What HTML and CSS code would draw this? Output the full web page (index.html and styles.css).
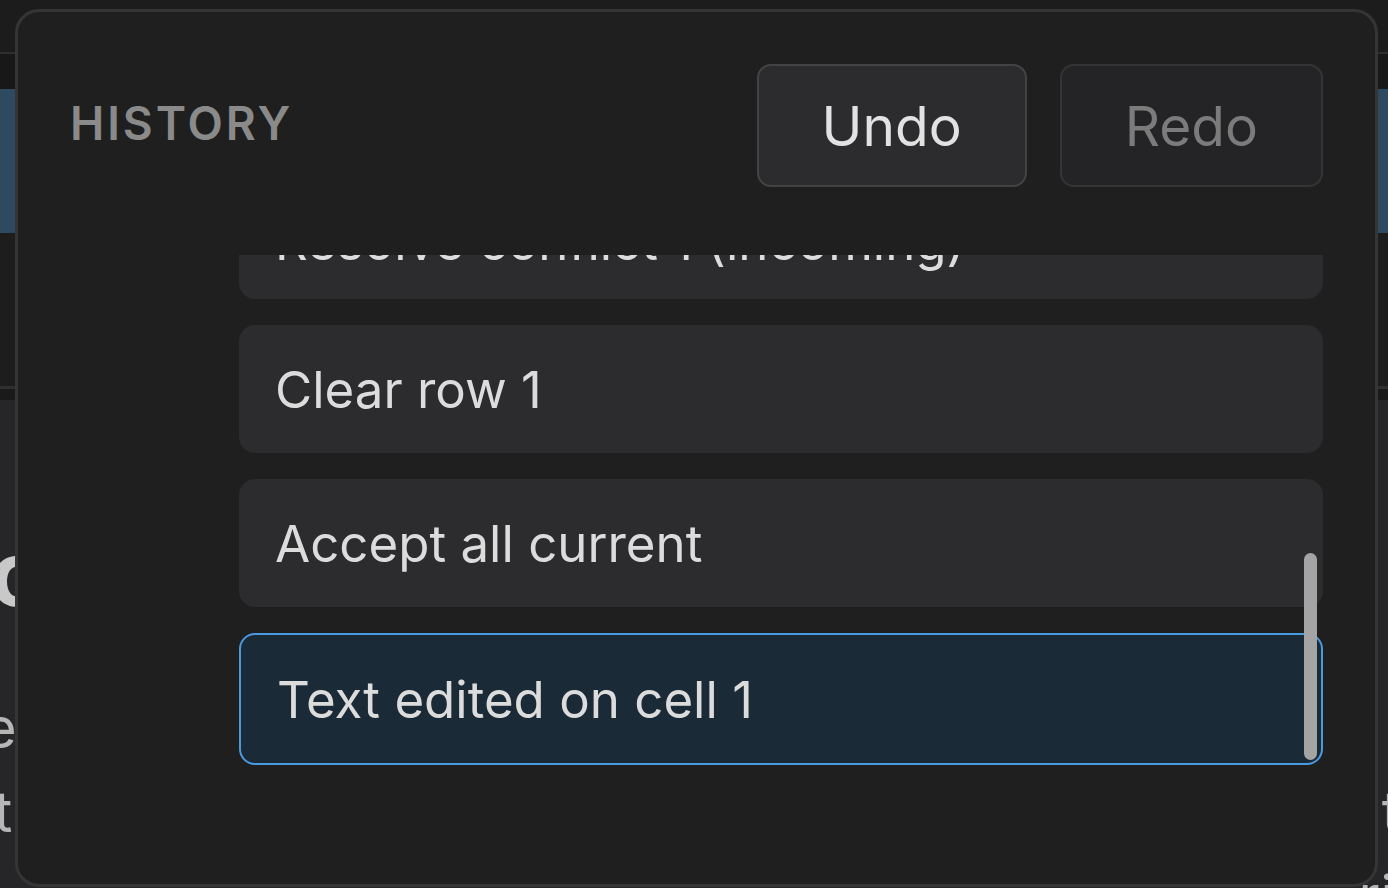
FILE: index.html
```html
<!DOCTYPE html>
<html lang="en">
<head>
<meta charset="utf-8">
<title>History</title>
<link rel="stylesheet" href="styles.css">
</head>
<body>
  <div class="app">
    <header class="topbar"></header>
    <div class="subbar"></div>
    <div class="banner"></div>
    <div class="toolbar"></div>
    <div class="strip"></div>
    <main class="doc">
      <div class="doc-col doc-left">
        <h1 class="doc-title">o</h1>
        <p class="doc-line line-e">e</p>
        <p class="doc-line line-t">t</p>
      </div>
      <div class="doc-col doc-right">
        <div class="doc-title-spacer"></div>
        <p class="doc-line">&nbsp;</p>
        <p class="doc-line line-rt">t</p>
        <p class="doc-line line-ri">ri</p>
      </div>
    </main>
  </div>

  <section class="history-panel" aria-label="History">
    <div class="history-header">
      <h2 class="history-title">HISTORY</h2>
      <div class="history-actions">
        <button class="btn btn-undo" type="button">Undo</button>
        <button class="btn btn-redo" type="button">Redo</button>
      </div>
    </div>
    <div class="history-list">
      <div class="history-item is-clipped">Resolve conflict 1 (incoming)</div>
      <div class="history-item">Clear row 1</div>
      <div class="history-item">Accept all current</div>
      <div class="history-item is-current">Text edited on cell 1</div>
      <div class="scroll-thumb"></div>
    </div>
  </section>
</body>
</html>
```

FILE: styles.css
```css
* {
  box-sizing: border-box;
}

html, body {
  margin: 0;
  padding: 0;
  width: 1388px;
  height: 888px;
  overflow: hidden;
  background: #1c1c1c;
  font-family: Inter, "Noto Sans", "Liberation Sans", sans-serif;
}

/* ---------- background application ---------- */
.app {
  display: flex;
  flex-direction: column;
  height: 888px;
}

.app > * {
  flex: none;
}

.topbar {
  height: 54px;
  background: #1c1c1c;
  border-bottom: 2px solid #2f2f2f;
}

.subbar {
  height: 35px;
  background: #181818;
}

.banner {
  height: 144px;
  background: #2e4a61;
}

.toolbar {
  height: 156px;
  background: #1d1d1d;
  border-bottom: 3px solid #2f2f2f;
}

.strip {
  height: 11px;
  background: #1a1a1a;
}

.app > .doc {
  flex: 1;
}

.doc {
  display: flex;
  justify-content: space-between;
  background: #262628;
  padding-top: 114px;
  overflow: hidden;
  white-space: nowrap;
}

.doc-col {
  display: flex;
  flex-direction: column;
}

.doc-col > * {
  flex: none;
}

.doc-left {
  align-items: flex-start;
}

.doc-right {
  align-items: flex-end;
}

.doc-title {
  margin: 0 0 52px -10px;
  font-size: 90px;
  line-height: 120px;
  font-weight: 700;
  color: #c8c8c8;
}

.doc-title-spacer {
  height: 120px;
  margin-bottom: 52px;
}

.doc-line {
  margin: 0;
  font-size: 56px;
  line-height: 84px;
  color: #b6b6b6;
}

.line-e { margin-left: -16px; }
.line-t { margin-left: -6px; }
.line-rt { margin-right: -12px; }
.line-ri { margin-right: -6px; }

/* ---------- history panel (overlay) ---------- */
.history-panel {
  position: fixed;
  left: 15px;
  top: 9px;
  width: 1363px;
  height: 878px;
  display: flex;
  flex-direction: column;
  padding: 52px 52px 119px 52px;
  background: #1f1f1f;
  border: 3px solid #353535;
  border-radius: 24px;
}

.history-header {
  display: flex;
  align-items: center;
  justify-content: space-between;
  height: 123px;
  flex: none;
}

.history-title {
  margin: 0 0 5px;
  font-size: 46px;
  font-weight: 600;
  letter-spacing: 2.9px;
  color: #8a8a8a;
}

.history-actions {
  display: flex;
  gap: 33px;
  height: 123px;
}

.btn {
  height: 123px;
  padding: 0 63px;
  border-radius: 14px;
  font-family: inherit;
  font-size: 55px;
  font-weight: 400;
  cursor: pointer;
}

.btn-undo {
  background: #2c2c2e;
  border: 2px solid #434343;
  color: #e2e2e2;
}

.btn-redo {
  background: #242426;
  border: 2px solid #343434;
  color: #7b7b7b;
}

.history-list {
  position: relative;
  flex: 1;
  margin-top: 68px;
  margin-left: 169px;
  display: flex;
  flex-direction: column;
  justify-content: flex-end;
  gap: 26px;
  overflow: hidden;
}

.history-item {
  flex: none;
  box-sizing: content-box;
  height: 128px;
  padding: 0 36px;
  display: flex;
  align-items: center;
  background: #2c2c2e;
  border-radius: 16px;
  font-size: 51px;
  color: #dcdcdc;
  white-space: nowrap;
}

.history-item.is-clipped {
  padding-top: 12px;
  height: 116px;
}

.history-item.is-current {
  background: #1b2a37;
  border: 2px solid #4a9ae0;
  padding-left: 36px;
}

.scroll-thumb {
  position: absolute;
  right: 6px;
  bottom: 5px;
  width: 13px;
  height: 207px;
  border-radius: 7px;
  background: #a4a4a4;
}
```
